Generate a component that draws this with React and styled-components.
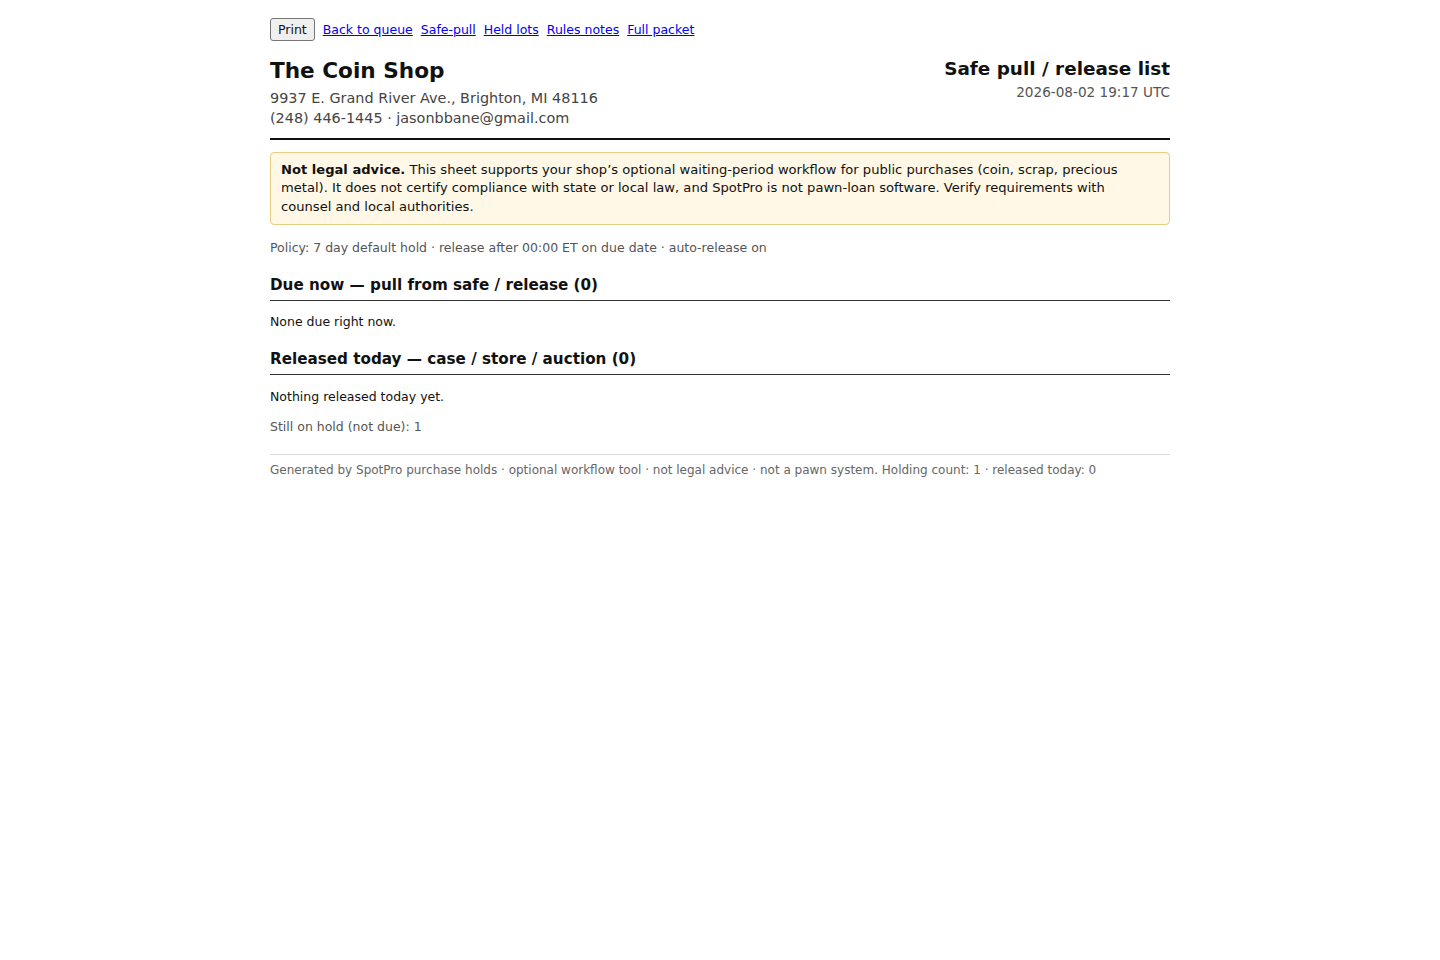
import React from 'react';
import styled, { createGlobalStyle } from 'styled-components';

const Global = createGlobalStyle`
  body {
    margin: 0;
    background: #fff;
    color: #111;
    font-family: "DejaVu Sans", Verdana, sans-serif;
  }
`;

const Page = styled.div`
  width: 900px;
  margin: 0 auto;
  padding: 18px 0 24px;
`;

const Toolbar = styled.div`
  display: flex;
  align-items: center;
  gap: 8px;
  font-size: 12.5px;
  height: 23px;
  margin-bottom: 15px;

  a {
    color: #0000ee;
    text-decoration: underline;
  }
`;

const PrintButton = styled.button`
  font-family: inherit;
  font-size: 12.5px;
  height: 23px;
  padding: 0 7px;
  background: #efefef;
  border: 1px solid #767676;
  border-radius: 3px;
  color: #111;
`;

const Header = styled.header`
  display: flex;
  justify-content: space-between;
  align-items: flex-start;
  border-bottom: 2px solid #111;
  padding-bottom: 10px;
  margin-bottom: 12px;
`;

const Shop = styled.h1`
  font-size: 21.6px;
  line-height: 28px;
  margin: 1px 0 3px;
`;

const Meta = styled.div`
  font-size: 14.4px;
  color: #444;
  line-height: 20px;
`;

const Right = styled.div`
  text-align: right;
`;

const Title = styled.h2`
  font-size: 18.4px;
  line-height: 24px;
  margin: 1px 0 2px;
`;

const Stamp = styled.div`
  font-size: 13.6px;
  line-height: 18px;
  color: #555;
`;

const Notice = styled.div`
  background: #fff8e6;
  border: 1px solid #e6cf80;
  border-radius: 4px;
  padding: 8px 10px;
  font-size: 13.1px;
  line-height: 18.4px;
`;

const Policy = styled.p`
  font-size: 12.5px;
  line-height: 18px;
  color: #555;
  margin: 14px 0 0;
`;

const SectionTitle = styled.h3`
  font-size: 15.2px;
  line-height: 20px;
  margin: 18px 0 0;
  padding-bottom: 5px;
  border-bottom: 1px solid #333;
`;

const Text = styled.p`
  font-size: 12.5px;
  line-height: 18px;
  margin: ${p => p.$top || 12}px 0 0;
  color: ${p => (p.$muted ? '#555' : '#111')};
`;

const Footer = styled.footer`
  margin-top: 18px;
  border-top: 1px solid #ddd;
  padding-top: 7px;
  font-size: 12px;
  line-height: 16px;
  color: #666;
`;

export default function App() {
  return (
    <>
      <Global />
      <Page>
        <Toolbar>
          <PrintButton>Print</PrintButton>
          <a href="#queue">Back to queue</a>
          <a href="#safe">Safe-pull</a>
          <a href="#held">Held lots</a>
          <a href="#rules">Rules notes</a>
          <a href="#packet">Full packet</a>
        </Toolbar>
        <Header>
          <div>
            <Shop>The Coin Shop</Shop>
            <Meta>9937 E. Grand River Ave., Brighton, MI 48116</Meta>
            <Meta>(248) 446-1445 · jasonbbane@gmail.com</Meta>
          </div>
          <Right>
            <Title>Safe pull / release list</Title>
            <Stamp>2026-08-02 19:17 UTC</Stamp>
          </Right>
        </Header>
        <Notice>
          <strong>Not legal advice.</strong> This sheet supports your shop’s optional waiting-period
          workflow for public purchases (coin, scrap, precious metal). It does not certify compliance
          with state or local law, and SpotPro is not pawn-loan software. Verify requirements with
          counsel and local authorities.
        </Notice>
        <Policy>Policy: 7 day default hold · release after 00:00 ET on due date · auto-release on</Policy>
        <SectionTitle>Due now — pull from safe / release (0)</SectionTitle>
        <Text>None due right now.</Text>
        <SectionTitle>Released today — case / store / auction (0)</SectionTitle>
        <Text $top={13}>Nothing released today yet.</Text>
        <Text $muted>Still on hold (not due): 1</Text>
        <Footer>
          Generated by SpotPro purchase holds · optional workflow tool · not legal advice · not a pawn
          system. Holding count: 1 · released today: 0
        </Footer>
      </Page>
    </>
  );
}
